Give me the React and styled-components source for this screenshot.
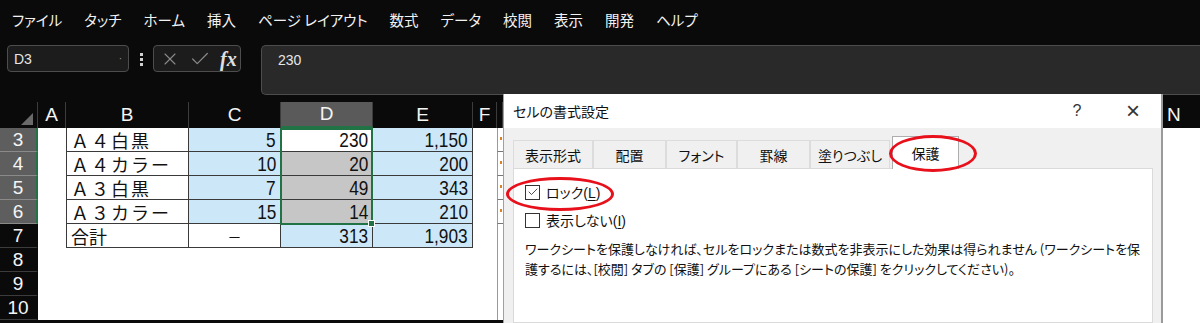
import styled, { createGlobalStyle } from "styled-components";
import { X, Check } from "lucide-react";

const GlobalStyle = createGlobalStyle`
  html, body {
    margin: 0;
    background: #0a0a0a;
    font-family: "Noto Sans CJK JP", "Noto Sans", sans-serif;
    overflow: hidden;
  }
`;

const Page = styled.div`
  width: 1200px;
  height: 323px;
  overflow: hidden;
  background: #0a0a0a;
`;

const MenuBar = styled.div`
  height: 45px;
  display: flex;
  align-items: center;
  gap: 22px;
  padding: 0 0 7px 12px;
  box-sizing: border-box;
  color: #f2f2f2;
  font-size: 14.5px;
  font-feature-settings: "palt";
`;

const MenuItem = styled.span`
  white-space: nowrap;
`;

const FormulaRow = styled.div`
  height: 50px;
  display: flex;
  align-items: flex-start;
  padding-left: 7px;
`;

const NameBox = styled.div`
  width: 122px;
  height: 27px;
  box-sizing: border-box;
  border: 1px solid #4d4d4d;
  border-radius: 4px;
  background: #1c1c1c;
  color: #e6e6e6;
  font-family: "Liberation Sans", sans-serif;
  font-size: 14px;
  display: flex;
  align-items: center;
  justify-content: space-between;
  padding: 0 6px 0 6px;
`;

const Dots = styled.div`
  width: 24px;
  display: flex;
  flex-direction: column;
  align-items: center;
  gap: 2px;
  padding-top: 8px;

  span {
    width: 3px;
    height: 3px;
    background: #d0d0d0;
  }
`;

const FxBox = styled.div`
  width: 88px;
  height: 27px;
  box-sizing: border-box;
  border: 1px solid #4d4d4d;
  border-radius: 4px;
  background: #1c1c1c;
  display: flex;
  align-items: center;
  gap: 9px;
  padding-left: 6px;
  color: #8a8a8a;
`;

const Fx = styled.span`
  font-family: "Liberation Serif", serif;
  font-style: italic;
  font-weight: bold;
  font-size: 20px;
  color: #e0e0e0;
  line-height: 1;
`;

const FormulaInput = styled.div`
  flex: 1;
  margin-left: 20px;
  height: 50px;
  box-sizing: border-box;
  border: 1px solid #4d4d4d;
  border-right: none;
  border-radius: 5px 0 0 5px;
  background: #292929;
  color: #e6e6e6;
  font-family: "Liberation Sans", sans-serif;
  font-size: 14px;
  padding: 6px 0 0 16px;
`;

const Main = styled.div`
  display: flex;
  height: 228px;
`;

const COLS = "38px 28px 123px 92px 92px 100px 24px 6px";

const Sheet = styled.div`
  position: relative;
  width: 503px;
  padding-top: 7px;
  box-sizing: border-box;
`;

const Row = styled.div`
  display: grid;
  grid-template-columns: ${COLS};
  height: ${(p) => p.$h || 24}px;
`;

const ColHead = styled.div`
  background: ${(p) => (p.$sel ? "#5a5a5a" : "#0a0a0a")};
  color: #f5f5f5;
  font-family: "Liberation Sans", sans-serif;
  font-size: 19px;
  display: flex;
  align-items: center;
  justify-content: center;
  border-right: 1px solid #3c3c3c;
  border-bottom: ${(p) => (p.$sel ? "2px solid #217346" : "none")};
  box-sizing: border-box;
`;

const Corner = styled.div`
  background: #0a0a0a;
  border-right: 1px solid #3c3c3c;
  position: relative;

  &::after {
    content: "";
    position: absolute;
    right: 4px;
    bottom: 3px;
    border-left: 12px solid transparent;
    border-bottom: 12px solid #6a6a6a;
  }
`;

const RowHead = styled.div`
  background: ${(p) => (p.$sel ? "#5e5e5e" : "#0a0a0a")};
  color: #f5f5f5;
  font-family: "Liberation Sans", sans-serif;
  font-size: 19px;
  display: flex;
  align-items: center;
  justify-content: center;
  border-bottom: 1px solid ${(p) => (p.$sel ? "#8a8a8a" : "#3c3c3c")};
  border-right: 2px solid ${(p) => (p.$sel ? "#217346" : "#0a0a0a")};
  box-sizing: border-box;
`;

const Cell = styled.div`
  background: ${(p) => p.$bg || "#fff"};
  color: #111;
  font-family: "Noto Sans CJK JP", sans-serif;
  font-size: 18px;
  line-height: 1;
  display: flex;
  align-items: center;
  justify-content: ${(p) => p.$align || "flex-start"};
  padding: 0 4px;
  box-sizing: border-box;
  border-right: ${(p) => (p.$table ? "1px solid #3a3a3a" : "none")};
  border-bottom: ${(p) => (p.$table ? "1px solid #3a3a3a" : "none")};
  border-left: ${(p) => (p.$first ? "1px solid #3a3a3a" : "none")};
  letter-spacing: ${(p) => (p.$wide ? "2px" : "0")};
  white-space: nowrap;
`;

const Num = styled.span`
  font-family: "Liberation Sans", sans-serif;
  font-size: 21px;
  display: inline-block;
  transform: scaleX(0.82);
  transform-origin: right center;
`;

const Dash = styled.span`
  font-size: 14px;
`;

const Strip = styled.div`
  background: #fff;
  border-left: 1px solid #9a9a9a;
  border-bottom: ${(p) => (p.$line ? "1px solid #777" : "none")};
  box-sizing: border-box;
  position: relative;

  &::after {
    content: "";
    display: ${(p) => (p.$line ? "block" : "none")};
    position: absolute;
    right: 1px;
    top: 9px;
    width: 2px;
    height: 3px;
    background: #d9822b;
  }
`;

const Selection = styled.div`
  position: absolute;
  left: 280px;
  top: 33px;
  width: 93px;
  height: 97px;
  border: 2px solid #217346;
  box-sizing: border-box;
  pointer-events: none;

  &::after {
    content: "";
    position: absolute;
    right: -4px;
    bottom: -4px;
    width: 5px;
    height: 5px;
    background: #217346;
    border: 1px solid #fff;
  }
`;

const Dialog = styled.div`
  position: relative;
  width: 660px;
  margin-top: -1px;
  background: #f0f0f0;
  border-left: 1px solid #a0a0a0;
  border-right: 2px solid #9a9a9a;
  box-sizing: border-box;
  display: flex;
  flex-direction: column;
  font-feature-settings: "palt";
`;

const TitleBar = styled.div`
  height: 34px;
  background: #fff;
  display: flex;
  align-items: center;
  padding: 0 0 0 9px;
  font-size: 14px;
  color: #111;
`;

const Title = styled.span`
  flex: 1;
`;

const TitleButton = styled.span`
  width: 56px;
  text-align: center;
  font-family: "Liberation Sans", sans-serif;
  font-size: ${(p) => p.$size || 16}px;
  color: #333;
  font-weight: 300;
`;

const Body = styled.div`
  flex: 1;
  padding: 11px 8px 0 9px;
  display: flex;
  flex-direction: column;
`;

const Tabs = styled.div`
  display: flex;
  align-items: flex-end;
  height: 29px;
`;

const Tab = styled.div`
  width: ${(p) => p.$w}px;
  height: ${(p) => (p.$active ? 33 : 28)}px;
  margin-left: ${(p) => p.$ml || 0}px;
  box-sizing: border-box;
  background: ${(p) => (p.$active ? "#fff" : "#f0f0f0")};
  border: 1px solid ${(p) => (p.$active ? "#adadad" : "#dcdcdc")};
  border-bottom: none;
  display: flex;
  align-items: center;
  justify-content: center;
  font-size: 14px;
  color: #111;
  margin-bottom: ${(p) => (p.$active ? -1 : 0)}px;
  position: relative;
  z-index: ${(p) => (p.$active ? 1 : 0)};
`;

const Panel = styled.div`
  flex: 1;
  background: #fff;
  border: 1px solid #dadada;
  padding: 9px 11px 0 11px;
  display: flex;
  flex-direction: column;
`;

const CheckRow = styled.label`
  display: flex;
  align-items: center;
  gap: 6px;
  height: 28px;
  font-size: 14px;
  color: #111;
`;

const Key = styled.span`
  font-family: "Liberation Sans", sans-serif;
  font-size: 14px;

  u {
    text-underline-offset: 2px;
  }
`;

const Box = styled.span`
  width: 13px;
  height: 13px;
  border: 1px solid #333;
  background: #fff;
  display: flex;
  align-items: center;
  justify-content: center;
  color: #222;
`;

const Desc = styled.p`
  margin: 5px 0 0;
  font-size: 13px;
  line-height: 20px;
  color: #111;
  white-space: nowrap;
`;

const Ellipse = styled.div`
  position: absolute;
  left: ${(p) => p.$x}px;
  top: ${(p) => p.$y}px;
  width: ${(p) => p.$w}px;
  height: ${(p) => p.$h}px;
  border: 3px solid #e8101a;
  border-radius: 50%;
  box-sizing: border-box;
  pointer-events: none;
  z-index: 2;
`;

const RightCol = styled.div`
  flex: 1;
  padding-top: 7px;
  display: flex;
  flex-direction: column;
`;

const NHead = styled.div`
  height: 26px;
  background: #0a0a0a;
  color: #f5f5f5;
  font-family: "Liberation Sans", sans-serif;
  font-size: 19px;
  padding-left: 4px;
  display: flex;
  align-items: center;
`;

const White = styled.div`
  flex: 1;
  background: #fff;
`;

const menu = ["ファイル", "タッチ", "ホーム", "挿入", "ページ レイアウト", "数式", "データ", "校閲", "表示", "開発", "ヘルプ"];

const data = [
  { r: 3, name: "Ａ４白黒", c: "5", d: "230", e: "1,150" },
  { r: 4, name: "Ａ４カラー", c: "10", d: "20", e: "200" },
  { r: 5, name: "Ａ３白黒", c: "7", d: "49", e: "343" },
  { r: 6, name: "Ａ３カラー", c: "15", d: "14", e: "210" },
];

const BLUE = "#cce8f8";
const GRAY = "#c6c6c6";

const tabs = [
  { label: "表示形式", w: 80 },
  { label: "配置", w: 73 },
  { label: "フォント", w: 71 },
  { label: "罫線", w: 73 },
  { label: "塗りつぶし", w: 80 },
];

export default function App() {
  return (
    <Page>
      <GlobalStyle />
      <MenuBar>
        {menu.map((m) => (
          <MenuItem key={m}>{m}</MenuItem>
        ))}
      </MenuBar>

      <FormulaRow>
        <NameBox>
          D3<span style={{ fontSize: 10, color: "#999" }}>·</span>
        </NameBox>
        <Dots>
          <span />
          <span />
          <span />
        </Dots>
        <FxBox>
          <X size={20} strokeWidth={1.3} />
          <Check size={22} strokeWidth={1.3} />
          <Fx>fx</Fx>
        </FxBox>
        <FormulaInput>230</FormulaInput>
      </FormulaRow>

      <Main>
        <Sheet>
          <Row $h={26}>
            <Corner />
            <ColHead>A</ColHead>
            <ColHead>B</ColHead>
            <ColHead>C</ColHead>
            <ColHead $sel>D</ColHead>
            <ColHead>E</ColHead>
            <ColHead>F</ColHead>
            <ColHead />
          </Row>
          {data.map((row) => (
            <Row key={row.r}>
              <RowHead $sel>{row.r}</RowHead>
              <Cell />
              <Cell $table $first $wide>{row.name}</Cell>
              <Cell $table $bg={BLUE} $align="flex-end"><Num>{row.c}</Num></Cell>
              <Cell $table $bg={row.r === 3 ? "#fff" : GRAY} $align="flex-end"><Num>{row.d}</Num></Cell>
              <Cell $table $bg={BLUE} $align="flex-end"><Num>{row.e}</Num></Cell>
              <Cell />
              <Strip $line />
            </Row>
          ))}
          <Row>
            <RowHead>7</RowHead>
            <Cell />
            <Cell $table $first>合計</Cell>
            <Cell $table $align="center"><Dash>－</Dash></Cell>
            <Cell $table $bg={BLUE} $align="flex-end"><Num>313</Num></Cell>
            <Cell $table $bg={BLUE} $align="flex-end"><Num>1,903</Num></Cell>
            <Cell />
            <Strip />
          </Row>
          {[8, 9, 10].map((r) => (
            <Row key={r}>
              <RowHead>{r}</RowHead>
              <Cell />
              <Cell />
              <Cell />
              <Cell />
              <Cell />
              <Cell />
              <Strip />
            </Row>
          ))}
          <Selection />
        </Sheet>

        <Dialog>
          <TitleBar>
            <Title>セルの書式設定</Title>
            <TitleButton>?</TitleButton>
            <TitleButton $size={24}>×</TitleButton>
          </TitleBar>
          <Body>
            <Tabs>
              {tabs.map((t) => (
                <Tab key={t.label} $w={t.w}>{t.label}</Tab>
              ))}
              <Tab $w={67} $ml={2} $active>保護</Tab>
            </Tabs>
            <Panel>
              <CheckRow>
                <Box>
                  <Check size={12} strokeWidth={1.6} />
                </Box>
                <span>
                  ロック<Key>(<u>L</u>)</Key>
                </span>
              </CheckRow>
              <CheckRow>
                <Box />
                <span>
                  表示しない<Key>(<u>I</u>)</Key>
                </span>
              </CheckRow>
              <Desc>
                ワークシートを保護しなければ、セルをロックまたは数式を非表示にした効果は得られません (ワークシートを保
                <br />
                護するには、[校閲] タブの [保護] グループにある [シートの保護] をクリックしてください)。
              </Desc>
            </Panel>
          </Body>
          <Ellipse $x={2} $y={83} $w={108} $h={34} />
          <Ellipse $x={385} $y={41} $w={88} $h={37} />
        </Dialog>

        <RightCol>
          <NHead>N</NHead>
          <White />
        </RightCol>
      </Main>
    </Page>
  );
}
